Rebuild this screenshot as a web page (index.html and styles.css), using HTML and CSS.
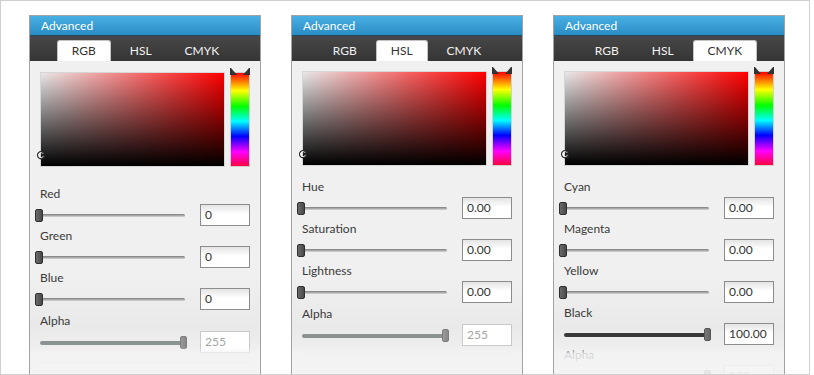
FILE: index.html
```html
<!DOCTYPE html>
<html lang="en">
<head>
<meta charset="utf-8">
<title>Color Picker – Advanced</title>
<link rel="stylesheet" href="styles.css">
</head>
<body>
<div class="frame">

  <section class="panel panel--rgb">
    <header class="panel__title">Advanced</header>
    <nav class="tabs"><span class="tab tab--active">RGB</span><span class="tab">HSL</span><span class="tab">CMYK</span></nav>
    <div class="panel__body">
      <div class="picker">
        <div class="sv">
          <svg class="sv__cursor" viewBox="0 0 10 10"><path d="M8.2 3.2 A3.6 3.6 0 1 0 8.6 6.2" fill="none" stroke="#2a2a2a" stroke-width="1.3"/><path d="M7.2 3.8 A2.5 2.5 0 1 0 7.5 5.8" fill="none" stroke="#fff" stroke-width="0.8"/></svg>
        </div>
        <div class="hue">
          <svg class="hue__ears" viewBox="0 0 20 8"><polygon points="0,0 1,0 7,7 0,7" fill="#333"/><polygon points="20,0 19,0 13,7 20,7" fill="#333"/></svg>
        </div>
      </div>
      <div class="fields">
        <div class="field"><div class="field__label">Red</div><div class="field__ctrl"><div class="slider"><div class="slider__track"></div><div class="slider__thumb"></div></div><div class="input">0</div></div></div>
        <div class="field"><div class="field__label">Green</div><div class="field__ctrl"><div class="slider"><div class="slider__track"></div><div class="slider__thumb"></div></div><div class="input">0</div></div></div>
        <div class="field"><div class="field__label">Blue</div><div class="field__ctrl"><div class="slider"><div class="slider__track"></div><div class="slider__thumb"></div></div><div class="input">0</div></div></div>
        <div class="field field--alpha"><div class="field__label">Alpha</div><div class="field__ctrl"><div class="slider slider--off"><div class="slider__track"></div><div class="slider__thumb"></div></div><div class="input input--off">255</div></div></div>
        <div class="rule"></div>
      </div>
    </div>
    <div class="panel__fade"></div>
  </section>

  <section class="panel">
    <header class="panel__title">Advanced</header>
    <nav class="tabs"><span class="tab">RGB</span><span class="tab tab--active">HSL</span><span class="tab">CMYK</span></nav>
    <div class="panel__body">
      <div class="picker">
        <div class="sv">
          <svg class="sv__cursor" viewBox="0 0 10 10"><path d="M8.2 3.2 A3.6 3.6 0 1 0 8.6 6.2" fill="none" stroke="#2a2a2a" stroke-width="1.3"/><path d="M7.2 3.8 A2.5 2.5 0 1 0 7.5 5.8" fill="none" stroke="#fff" stroke-width="0.8"/></svg>
        </div>
        <div class="hue">
          <svg class="hue__ears" viewBox="0 0 20 8"><polygon points="0,0 1,0 7,7 0,7" fill="#333"/><polygon points="20,0 19,0 13,7 20,7" fill="#333"/></svg>
        </div>
      </div>
      <div class="fields">
        <div class="field"><div class="field__label">Hue</div><div class="field__ctrl"><div class="slider"><div class="slider__track"></div><div class="slider__thumb"></div></div><div class="input">0.00</div></div></div>
        <div class="field"><div class="field__label">Saturation</div><div class="field__ctrl"><div class="slider"><div class="slider__track"></div><div class="slider__thumb"></div></div><div class="input">0.00</div></div></div>
        <div class="field"><div class="field__label">Lightness</div><div class="field__ctrl"><div class="slider"><div class="slider__track"></div><div class="slider__thumb"></div></div><div class="input">0.00</div></div></div>
        <div class="field field--alpha"><div class="field__label">Alpha</div><div class="field__ctrl"><div class="slider slider--off"><div class="slider__track"></div><div class="slider__thumb"></div></div><div class="input input--off">255</div></div></div>
        <div class="rule"></div>
      </div>
    </div>
    <div class="panel__fade"></div>
  </section>

  <section class="panel">
    <header class="panel__title">Advanced</header>
    <nav class="tabs"><span class="tab">RGB</span><span class="tab">HSL</span><span class="tab tab--active">CMYK</span></nav>
    <div class="panel__body">
      <div class="picker">
        <div class="sv">
          <svg class="sv__cursor" viewBox="0 0 10 10"><path d="M8.2 3.2 A3.6 3.6 0 1 0 8.6 6.2" fill="none" stroke="#2a2a2a" stroke-width="1.3"/><path d="M7.2 3.8 A2.5 2.5 0 1 0 7.5 5.8" fill="none" stroke="#fff" stroke-width="0.8"/></svg>
        </div>
        <div class="hue">
          <svg class="hue__ears" viewBox="0 0 20 8"><polygon points="0,0 1,0 7,7 0,7" fill="#333"/><polygon points="20,0 19,0 13,7 20,7" fill="#333"/></svg>
        </div>
      </div>
      <div class="fields">
        <div class="field"><div class="field__label">Cyan</div><div class="field__ctrl"><div class="slider"><div class="slider__track"></div><div class="slider__thumb"></div></div><div class="input">0.00</div></div></div>
        <div class="field"><div class="field__label">Magenta</div><div class="field__ctrl"><div class="slider"><div class="slider__track"></div><div class="slider__thumb"></div></div><div class="input">0.00</div></div></div>
        <div class="field"><div class="field__label">Yellow</div><div class="field__ctrl"><div class="slider"><div class="slider__track"></div><div class="slider__thumb"></div></div><div class="input">0.00</div></div></div>
        <div class="field"><div class="field__label">Black</div><div class="field__ctrl"><div class="slider slider--full"><div class="slider__track"></div><div class="slider__thumb"></div></div><div class="input">100.00</div></div></div>
        <div class="field"><div class="field__label">Alpha</div><div class="field__ctrl"><div class="slider slider--off"><div class="slider__track"></div><div class="slider__thumb"></div></div><div class="input input--off">255</div></div></div>
      </div>
    </div>
    <div class="panel__fade"></div>
  </section>

</div>
</body>
</html>
```

FILE: styles.css
```css
* { box-sizing: border-box; }

html, body {
  margin: 0;
  background: #fff;
  font-family: Lato, "Noto Sans", sans-serif;
  font-size: 12px;
  color: #3a3a3a;
}

.frame {
  width: 810px;
  height: 375px;
  border: 1px solid #cfcfcf;
  padding: 14px 0 0 28px;
  display: flex;
  gap: 30px;
  overflow: hidden;
}

.panel {
  position: relative;
  flex: none;
  width: 232px;
  height: 372px;
  border: 1px solid #a3a3a3;
  background: linear-gradient(#f0f0f0 0, #f0f0f0 260px, #e9e9e9 310px, #f3f3f3 350px);
  display: flex;
  flex-direction: column;
}

.panel__title {
  height: 20px;
  line-height: 19px;
  padding-left: 11px;
  color: #fff;
  background: linear-gradient(#48b0e3, #2b8cc5);
  border-bottom: 1px solid #23495f;
}

.tabs {
  height: 25px;
  padding-top: 4px;
  display: flex;
  justify-content: center;
  align-items: flex-end;
  gap: 5px;
  background: linear-gradient(#474747, #353535);
}

.tab {
  height: 21px;
  padding: 1px 14px 0;
  line-height: 20px;
  color: #f2f2f2;
}

.tab--active {
  background: #fff;
  color: #333;
  border: 1px solid #c4c4c4;
  border-bottom: none;
  border-radius: 3px 3px 0 0;
  padding-top: 0;
}

.panel__body {
  padding: 10px 10px 0;
}

.panel--rgb .panel__body { padding-top: 11px; }

.picker {
  display: flex;
  gap: 5px;
  height: 95px;
}

.sv {
  position: relative;
  width: 185px;
  border: 1px solid #d6d6d6;
  background:
    linear-gradient(to top, #000 0%, rgba(0,0,0,0) 100%),
    linear-gradient(to right, #e8e8e8 0%, #ff0000 100%);
}

.sv__cursor {
  position: absolute;
  left: -5px;
  top: 77px;
  width: 10px;
  height: 10px;
}

.hue {
  position: relative;
  width: 20px;
  border: 1px solid #d0d0d0;
  background: linear-gradient(#ff0000 0%, #ffff00 19%, #00ff00 36%, #00ffff 52%, #0000ff 68%, #ff00ff 85%, #ff0040 100%);
}

.hue__ears {
  position: absolute;
  left: -1px;
  top: -5px;
  width: 20px;
  height: 8px;
}

.fields { margin-top: 13px; }
.panel--rgb .fields { margin-top: 19px; }

.field--alpha { margin-top: 3px; }

.field__label {
  line-height: 16px;
  height: 16px;
}

.field__ctrl {
  display: flex;
  align-items: center;
  height: 22px;
  margin: 2px 0;
}

.slider {
  position: relative;
  width: 152px;
  height: 22px;
  margin-left: -5px;
  display: flex;
  align-items: center;
}

.slider__track {
  flex: 1;
  height: 3px;
  margin: 1px 2px 0;
  border-radius: 2px;
  background: linear-gradient(#7c7c7c, #a8a8a8 50%, #d8d8d8);
}

.slider__thumb {
  position: absolute;
  left: 0;
  top: 5px;
  width: 8px;
  height: 13px;
  border: 1px solid #2e2e2e;
  border-radius: 2px;
  background: linear-gradient(to right, #6a6a6a, #4a4a4a);
}

.slider--off .slider__track {
  height: 4px;
  margin: 1px 0 0 5px;
  background: #8a9292;
}

.slider--off .slider__thumb {
  left: auto;
  right: 0;
  width: 7px;
  border-color: #7d7d7d;
  background: linear-gradient(to right, #999, #888);
}

.slider--full .slider__track {
  height: 4px;
  margin: 1px 0 0 5px;
  background: #383838;
}

.slider--full .slider__thumb {
  left: auto;
  right: 0;
  width: 7px;
  border-color: #555;
  background: linear-gradient(to right, #777, #666);
}

.input {
  margin-left: auto;
  width: 50px;
  height: 22px;
  border: 1px solid #8c8c8c;
  padding-left: 4px;
  line-height: 20px;
  color: #333;
  background: linear-gradient(#e4e4e4, #fff 45%);
}

.input--off {
  border-color: #c9c9c9;
  color: #a5a5a5;
  background: #fff;
}

.rule {
  margin-top: 9px;
  height: 1px;
  background: #dcdcdc;
}

.panel__fade {
  position: absolute;
  left: 0;
  right: 0;
  top: 331px;
  bottom: 0;
  background: linear-gradient(rgba(243,243,243,0) 0, rgba(243,243,243,0.85) 7px, rgba(243,243,243,0.85) 100%);
}
```
